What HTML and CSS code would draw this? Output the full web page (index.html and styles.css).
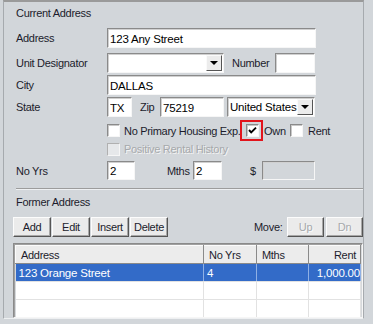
FILE: index.html
```html
<!DOCTYPE html>
<html lang="en">

<head>
    <meta charset="UTF-8">
    <link rel="stylesheet" href="styles.css">
    <title>Current Address</title>
</head>

<body>
    <div class="panel">
        <div class="heading">Current Address</div>

        <div class="row row-address">
            <span class="lbl">Address</span>
            <input class="field w-wide" type="text" value="123 Any Street">
        </div>

        <div class="row row-unit">
            <span class="lbl">Unit Designator</span>
            <div class="combo w-unit"><span class="combo-text"></span><span class="drop"></span></div>
            <span class="lbl-number">Number</span>
            <input class="field w-number" type="text" value="">
        </div>

        <div class="row row-city">
            <span class="lbl">City</span>
            <input class="field w-wide" type="text" value="DALLAS">
        </div>

        <div class="row row-state">
            <span class="lbl">State</span>
            <input class="field w-state" type="text" value="TX">
            <span class="lbl-zip">Zip</span>
            <input class="field w-zip" type="text" value="75219">
            <div class="combo w-country"><span class="combo-text">United States</span><span class="drop"></span></div>
        </div>

        <div class="row row-checks">
            <span class="lbl"></span>
            <span class="check"></span>
            <span class="check-text w-noprimary">No Primary Housing Exp.</span>
            <span class="highlight">
                <span class="check">
                    <svg width="11" height="11" viewBox="0 0 11 11"><path d="M2 5 L4.2 7.4 L9 2.6" fill="none" stroke="#000" stroke-width="1.9"/></svg>
                </span>
            </span>
            <span class="check-text w-own">Own</span>
            <span class="check"></span>
            <span class="check-text w-rent">Rent</span>
        </div>

        <div class="row row-positive">
            <span class="lbl"></span>
            <span class="check disabled"></span>
            <span class="check-text muted">Positive Rental History</span>
        </div>

        <div class="row row-years">
            <span class="lbl">No Yrs</span>
            <input class="field w-years" type="text" value="2">
            <span class="lbl-mths">Mths</span>
            <input class="field w-mths" type="text" value="2">
            <span class="lbl-dollar">$</span>
            <input class="field w-amount disabled" type="text" value="" disabled>
        </div>

        <div class="sep"></div>

        <div class="heading heading-former">Former Address</div>

        <div class="row row-buttons">
            <button class="btn">Add</button>
            <button class="btn">Edit</button>
            <button class="btn">Insert</button>
            <button class="btn">Delete</button>
            <span class="move-label">Move:</span>
            <button class="btn btn-off" disabled>Up</button>
            <button class="btn btn-off" disabled>Dn</button>
        </div>

        <div class="grid">
            <table>
                <colgroup>
                    <col class="c-address">
                    <col class="c-yrs">
                    <col class="c-mths">
                    <col class="c-rent">
                </colgroup>
                <thead>
                    <tr>
                        <th>Address</th>
                        <th>No Yrs</th>
                        <th>Mths</th>
                        <th class="num">Rent</th>
                    </tr>
                </thead>
                <tbody>
                    <tr class="selected">
                        <td>123 Orange Street</td>
                        <td>4</td>
                        <td></td>
                        <td class="num">1,000.00</td>
                    </tr>
                    <tr>
                        <td></td>
                        <td></td>
                        <td></td>
                        <td></td>
                    </tr>
                    <tr>
                        <td></td>
                        <td></td>
                        <td></td>
                        <td></td>
                    </tr>
                </tbody>
            </table>
        </div>
    </div>
</body>

</html>
```

FILE: styles.css
```css
body {
    margin: 0;
    background: #d2d6da;
    font-family: "Liberation Sans", Arial, sans-serif;
    font-size: 11px;
    letter-spacing: -0.3px;
    color: #1c1c2c;
}

.panel {
    margin-left: 3px;
    width: 361px;
    height: 319px;
    box-sizing: border-box;
    border-top: 2px solid #9a9a9a;
    border-left: 1px solid #a6aaae;
    border-right: 1px solid #a6aaae;
    border-bottom: 1px solid #eef0f2;
    padding-left: 12px;
}

.heading {
    margin-top: 5px;
    height: 13px;
    line-height: 13px;
}

.heading-former {
    margin-top: 6px;
}

.row {
    display: flex;
    align-items: center;
    height: 20px;
}

.row-address { margin-top: 8px; }
.row-unit { margin-top: 5px; }
.row-city { margin-top: 2px; }
.row-state { margin-top: 2px; }
.row-checks { margin-top: 3px; height: 21px; }
.row-positive { margin-top: 1px; height: 14px; }
.row-years { margin-top: 5px; height: 19px; }
.row-buttons { margin-top: 8px; margin-left: -3px; }

.lbl {
    width: 91px;
    flex: none;
}

/* text boxes */
.field {
    box-sizing: border-box;
    height: 20px;
    margin: 0;
    padding: 1px 2px 0;
    font-family: inherit;
    font-size: 11.5px;
    letter-spacing: -0.2px;
    color: #000;
    background: #fff;
    border: 1px solid;
    border-color: #8a8a8a #f6f6f6 #f6f6f6 #8a8a8a;
    box-shadow: inset 1px 1px 0 #d0d0d0;
    outline: none;
    flex: none;
}

.row-years .field {
    height: 19px;
}

.field.disabled {
    background: #d2d6da;
}

.w-wide { width: 209px; }
.w-number { width: 40px; }
.w-state { width: 25px; }
.w-zip { width: 64px; }
.w-years { width: 28px; }
.w-mths { width: 29px; }
.w-amount { width: 53px; }

/* drop down lists */
.combo {
    box-sizing: border-box;
    height: 20px;
    display: flex;
    align-items: center;
    background: #fff;
    border: 1px solid;
    border-color: #8a8a8a #f6f6f6 #f6f6f6 #8a8a8a;
    box-shadow: inset 1px 1px 0 #d0d0d0;
    padding: 1px 1px 1px 2px;
    flex: none;
    font-size: 11.5px;
    letter-spacing: -0.2px;
    color: #000;
}

.w-unit { width: 117px; }
.w-country { width: 88px; margin-left: 3px; }

.combo-text {
    flex: 1;
    white-space: nowrap;
    overflow: hidden;
}

.drop {
    position: relative;
    width: 16px;
    height: 16px;
    box-sizing: border-box;
    background: #ececec;
    border: 1px solid;
    border-color: #fafafa #555 #555 #fafafa;
    flex: none;
}

.drop::after {
    content: "";
    position: absolute;
    left: 3px;
    top: 5px;
    border-left: 4px solid transparent;
    border-right: 4px solid transparent;
    border-top: 4px solid #000;
}

.lbl-number {
    width: 43px;
    margin-left: 8px;
    flex: none;
}

.lbl-zip {
    width: 20px;
    margin-left: 8px;
    flex: none;
}

.lbl-mths {
    width: 26px;
    margin-left: 32px;
    flex: none;
}

.lbl-dollar {
    width: 12px;
    margin-left: 28px;
    flex: none;
}

/* check boxes */
.check {
    box-sizing: border-box;
    width: 13px;
    height: 13px;
    background: #fff;
    border: 1px solid;
    border-color: #8a8a8a #f6f6f6 #f6f6f6 #8a8a8a;
    box-shadow: inset 1px 1px 0 #c8c8c8;
    display: flex;
    align-items: center;
    justify-content: center;
    flex: none;
}

.check.disabled {
    background: #e6e8ea;
    border-color: #b0b0b0 #f6f6f6 #f6f6f6 #b0b0b0;
    box-shadow: none;
}

.check-text {
    margin-left: 4px;
    white-space: nowrap;
    flex: none;
}

.w-noprimary { width: 116px; }
.w-own { width: 26px; margin-left: 1px; }
.w-rent { margin-left: 5px; }

.muted {
    color: #a6a9ac;
    text-shadow: 1px 1px 0 #f4f4f4;
}

.highlight {
    box-sizing: border-box;
    width: 23px;
    height: 21px;
    border: 2px solid #e2141c;
    padding-left: 4px;
    display: flex;
    align-items: center;
    flex: none;
}

.sep {
    margin-top: 8px;
    border-top: 1px solid #9c9c9c;
    border-bottom: 1px solid #eef0f2;
}

/* buttons */
.btn {
    box-sizing: border-box;
    width: 38px;
    height: 20px;
    margin: 0 1px 0 0;
    padding: 0;
    font-family: inherit;
    font-size: 11px;
    letter-spacing: -0.3px;
    color: #1c1c2c;
    background: #ebebeb;
    border: 1px solid;
    border-color: #fcfcfc #555 #555 #fcfcfc;
    box-shadow: inset -1px -1px 0 #a8a8a8;
    flex: none;
}

.btn-off {
    width: 37px;
    margin-right: 2px;
    color: #a6a9ac;
    text-shadow: 1px 1px 0 #fafafa;
}

.btn-off:last-child {
    margin-right: 0;
}

.move-label {
    margin-left: auto;
    width: 33px;
}

/* former address grid */
.grid {
    margin-top: 6px;
    margin-left: -3px;
    width: 350px;
    height: 75px;
    box-sizing: border-box;
    border: 1px solid;
    border-color: #8a8a8a #f6f6f6 #f6f6f6 #8a8a8a;
    box-shadow: inset 1px 1px 0 #a0a0a0;
    padding: 1px 0 0 1px;
    background: #d6d9dc;
    overflow: hidden;
}

table {
    border-collapse: collapse;
    table-layout: fixed;
    width: 345px;
}

.c-address { width: 188px; }
.c-yrs { width: 53px; }
.c-mths { width: 52px; }
.c-rent { width: 52px; }

th {
    box-sizing: border-box;
    height: 18px;
    padding: 0 0 0 5px;
    font-weight: normal;
    text-align: left;
    background: #ececec;
    border: 1px solid;
    border-color: #fcfcfc #8a8a8a #8a8a8a #fcfcfc;
    color: #1c1c2c;
}

th.num {
    text-align: right;
    padding-right: 4px;
}

td {
    height: 17px;
    padding: 0 0 0 3px;
    background: #fff;
    border-right: 1px solid #e2e2e2;
    border-bottom: 1px solid #e2e2e2;
    white-space: nowrap;
    overflow: hidden;
    font-size: 11.5px;
    letter-spacing: -0.2px;
    color: #000;
}

td.num {
    text-align: right;
    padding-right: 0;
}

.selected td {
    background: #336bc8;
    color: #fff;
    border-right-color: #8fb0e4;
}
```
